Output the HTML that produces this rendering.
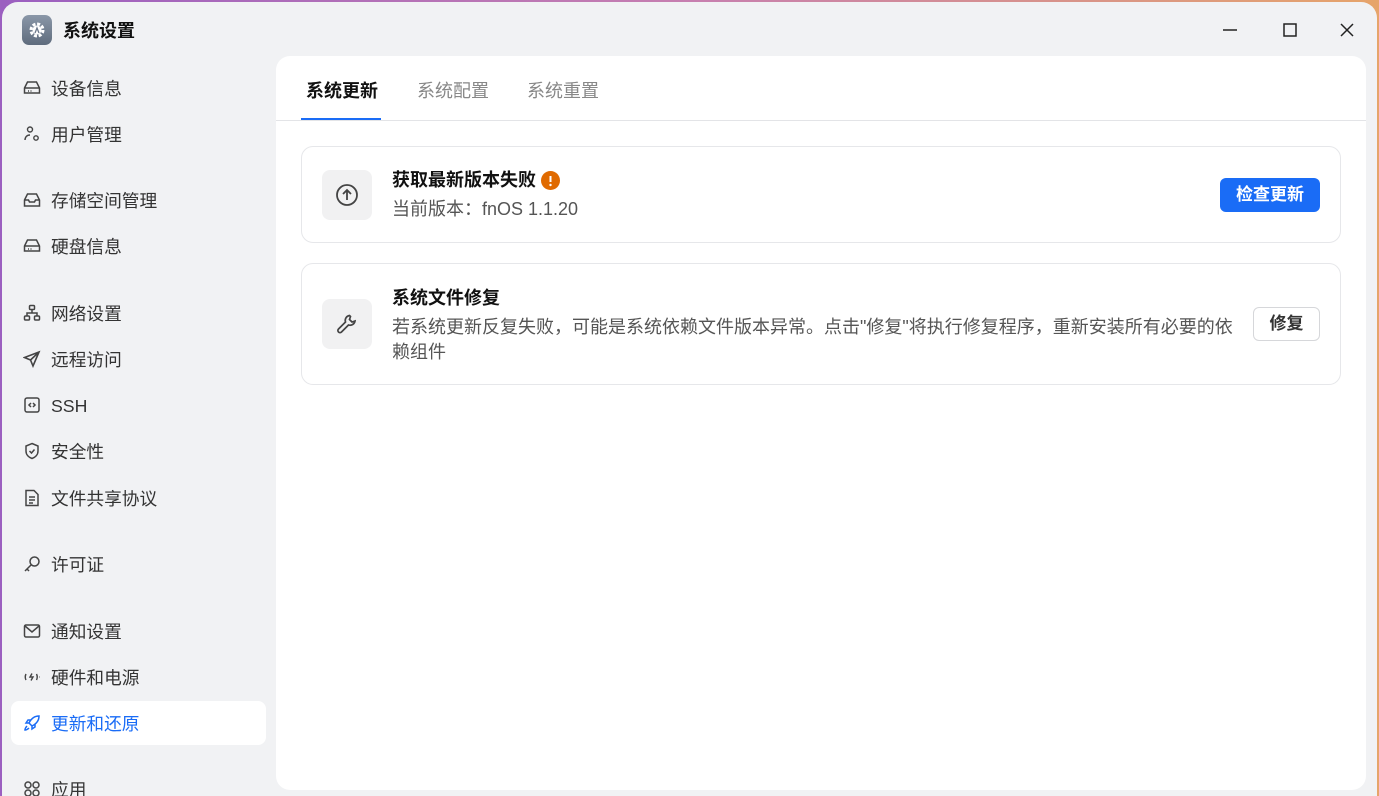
<!DOCTYPE html>
<html><head><meta charset="utf-8"><style>
*{box-sizing:border-box;margin:0;padding:0}
html,body{width:1379px;height:796px;overflow:hidden}
body{background:linear-gradient(90deg,#9b5fc0,#c77fb0 50%,#e6a46a);font-family:"Liberation Sans","Noto Sans CJK SC",sans-serif;position:relative}
.win{position:absolute;left:2px;top:2px;right:2px;bottom:-30px;background:#f1f2f4;border-radius:16px 16px 0 0}
.title{position:absolute;left:20px;top:13px;display:flex;align-items:center}
.logo{width:30px;height:30px;border-radius:7px;background:linear-gradient(#8a97a8,#5f6c7d);display:flex;align-items:center;justify-content:center}
.title span{margin-left:11px;font-size:18px;font-weight:bold;color:#111}
.ctl{position:absolute;top:18px}
.nav{position:absolute;left:0;top:0;width:275px}
.it{position:absolute;left:11px;width:255px;height:44px;display:flex;align-items:center;font-size:17.7px;color:#333;border-radius:8px}
.it svg{position:absolute;left:12px;top:13px}
.it span{position:absolute;left:40px;top:11px;line-height:24px}
.it.act{background:#fff;color:#1a6cf6}
.panel{position:absolute;left:276px;top:56px;width:1090px;height:734px;background:#fff;border-radius:14px}
.tab{position:absolute;top:21px;font-size:18px;color:#888}
.card{position:absolute;left:25px;width:1040px;border:1px solid #e6e7ea;border-radius:12px}
.ib{position:absolute;left:20px;width:50px;height:50px;background:#f1f1f2;border-radius:8px;display:flex;align-items:center;justify-content:center}
.h{position:absolute;left:90px;font-size:18px;font-weight:bold;color:#111;line-height:24px}
.s{position:absolute;left:90px;font-size:18px;color:#555;line-height:25px}
</style></head><body>
<div class="win">
<div class="title"><div class="logo"><svg width="20" height="20" viewBox="0 0 20 20"><circle cx="10" cy="10" r="6" fill="none" stroke="#fff" stroke-width="3" stroke-dasharray="3 1.7"/><circle cx="10" cy="10" r="4.5" fill="#fff"/><path d="M8 13l2-5 2 5" stroke="#6c788a" stroke-width="1.3" fill="none"/></svg></div><span>系统设置</span></div>
<svg class="ctl" style="left:1218px" width="20" height="20"><path d="M3 10h14" stroke="#222" stroke-width="1.5"/></svg>
<svg class="ctl" style="left:1278px" width="20" height="20"><rect x="4" y="4" width="12" height="12" fill="none" stroke="#222" stroke-width="1.5"/></svg>
<svg class="ctl" style="left:1335px" width="20" height="20"><path d="M4 4l12 12M16 4L4 16" stroke="#222" stroke-width="1.5"/></svg>
</div>
<div class="nav">
<div class="it" style="top:66px"><svg width="18" height="18" viewBox="0 0 18 18" fill="none" stroke="#444" stroke-width="1.5"><path d="M1.5 9l3-6h9l3 6v5H1.5z M1.5 9h15"/><path d="M5 12h1M7.5 12h1"/></svg><span>设备信息</span></div>
<div class="it" style="top:112px"><svg width="18" height="18" viewBox="0 0 18 18" fill="none" stroke="#444" stroke-width="1.4"><circle cx="7" cy="4.5" r="2.5"/><path d="M2 15c0-3 2-5 5-5"/><circle cx="13" cy="13" r="2.2"/></svg><span>用户管理</span></div>
<div class="it" style="top:178px"><svg width="18" height="18" viewBox="0 0 18 18" fill="none" stroke="#444" stroke-width="1.5"><path d="M1.5 9l3-6h9l3 6v6H1.5z M1.5 9h4l1 2h5l1-2h4"/></svg><span>存储空间管理</span></div>
<div class="it" style="top:224px"><svg width="18" height="18" viewBox="0 0 18 18" fill="none" stroke="#444" stroke-width="1.5"><path d="M1.5 9l3-6h9l3 6v5H1.5z M1.5 9h15"/><path d="M5 12h1M7.5 12h1"/></svg><span>硬盘信息</span></div>
<div class="it" style="top:291px"><svg width="18" height="18" viewBox="0 0 18 18" fill="none" stroke="#444" stroke-width="1.5"><rect x="6.5" y="1.5" width="5" height="4" rx="1"/><rect x="1.5" y="12" width="5" height="4" rx="1"/><rect x="11.5" y="12" width="5" height="4" rx="1"/><path d="M9 5.5v3M4 12V9h10v3"/></svg><span>网络设置</span></div>
<div class="it" style="top:337px"><svg width="18" height="18" viewBox="0 0 18 18" fill="none" stroke="#444" stroke-width="1.6"><path d="M16 2L1.5 7.5l6 2.5 2.5 6z M7.5 10L16 2"/></svg><span>远程访问</span></div>
<div class="it" style="top:383px"><svg width="18" height="18" viewBox="0 0 18 18" fill="none" stroke="#444" stroke-width="1.5"><rect x="2" y="2" width="14" height="14" rx="2"/><path d="M8 7l-2 2 2 2M10 7l2 2-2 2"/></svg><span>SSH</span></div>
<div class="it" style="top:429px"><svg width="18" height="18" viewBox="0 0 18 18" fill="none" stroke="#444" stroke-width="1.5"><path d="M9 1.5l6 2.5v5c0 4-3 6.5-6 7.5-3-1-6-3.5-6-7.5V4z"/><path d="M6.5 9l2 2 3-3.5"/></svg><span>安全性</span></div>
<div class="it" style="top:476px"><svg width="18" height="18" viewBox="0 0 18 18" fill="none" stroke="#444" stroke-width="1.5"><path d="M3 1.5h8l4 4v11H3z"/><path d="M6 8h6M6 11h6M6 14h4"/></svg><span>文件共享协议</span></div>
<div class="it" style="top:542px"><svg width="18" height="18" viewBox="0 0 18 18" fill="none" stroke="#444" stroke-width="1.5"><circle cx="11.5" cy="6.5" r="4.5"/><path d="M8 10l-6 6M4 14l2 2"/></svg><span>许可证</span></div>
<div class="it" style="top:609px"><svg width="18" height="18" viewBox="0 0 18 18" fill="none" stroke="#444" stroke-width="1.5"><rect x="1.5" y="3" width="15" height="12" rx="1.5"/><path d="M2 4l7 6 7-6"/></svg><span>通知设置</span></div>
<div class="it" style="top:655px"><svg width="18" height="18" viewBox="0 0 18 18" fill="none" stroke="#444" stroke-width="1.4"><path d="M3 6c-1 2-1 4 0 6M13.5 6c1 2 1 4 0 6M9 5.5l-2 3.5h3l-2 3.5M16.5 9h.5"/></svg><span>硬件和电源</span></div>
<div class="it act" style="top:701px"><svg width="18" height="18" viewBox="0 0 18 18" fill="none" stroke="#1a6cf6" stroke-width="1.5"><path d="M16 2c-5 0-8 3-10 7l3 3c4-2 7-5 7-10z M6 9l-3 0 2-3h3 M9 12v3l3-2v-3"/><path d="M4 12c-1 1-2 3-2 4 1 0 3-1 4-2"/></svg><span>更新和还原</span></div>
<div class="it" style="top:767px"><svg width="18" height="18" viewBox="0 0 18 18" fill="none" stroke="#444" stroke-width="1.5"><circle cx="5" cy="5" r="3"/><circle cx="13" cy="5" r="3"/><circle cx="5" cy="13" r="3"/><circle cx="13" cy="13" r="3"/></svg><span>应用</span></div>
</div>
<div class="panel">
<div class="tab" style="left:30px;color:#111;font-weight:bold">系统更新</div>
<div class="tab" style="left:141px">系统配置</div>
<div class="tab" style="left:251px">系统重置</div>
<div style="position:absolute;left:25px;top:62px;width:80px;height:2px;background:#1a6cf6"></div>
<div style="position:absolute;left:0;top:64px;width:1090px;height:1px;background:#e3e4e7"></div>
<div class="card" style="top:90px;height:97px">
<div class="ib" style="top:23px"><svg width="26" height="26" viewBox="0 0 26 26" fill="none" stroke="#444" stroke-width="1.8"><circle cx="13" cy="13" r="10"/><path d="M13 18V8M9 12l4-4 4 4"/></svg></div>
<div class="h" style="top:21px">获取最新版本失败</div>
<svg style="position:absolute;left:239px;top:24px" width="19" height="19"><circle cx="9.5" cy="9.5" r="9.5" fill="#e06a00"/><path d="M9.5 5v6" stroke="#fff" stroke-width="2"/><circle cx="9.5" cy="14" r="1.2" fill="#fff"/></svg>
<div class="s" style="top:50px">当前版本：fnOS 1.1.20</div>
<div style="position:absolute;left:918px;top:31px;width:100px;height:34px;background:#1a6cf6;border-radius:6px;color:#fff;font-weight:bold;font-size:17px;text-align:center;line-height:34px">检查更新</div>
</div>
<div class="card" style="top:207px;height:122px">
<div class="ib" style="top:35px"><svg width="24" height="24" viewBox="0 0 24 24" fill="none" stroke="#444" stroke-width="1.7"><path d="M14.5 3.5a5 5 0 0 0-4 6.5L3.5 17a2 2 0 0 0 3 3l7-7a5 5 0 0 0 6.5-4l-3 1-2.5-2.5 1-3z"/></svg></div>
<div class="h" style="top:22px">系统文件修复</div>
<div class="s" style="top:51px;width:842px">若系统更新反复失败，可能是系统依赖文件版本异常。点击"修复"将执行修复程序，重新安装所有必要的依赖组件</div>
<div style="position:absolute;left:951px;top:43px;width:67px;height:34px;border:1px solid #d6d7da;border-radius:6px;color:#333;font-weight:bold;font-size:17px;text-align:center;line-height:32px">修复</div>
</div>
</div>
</body></html>
